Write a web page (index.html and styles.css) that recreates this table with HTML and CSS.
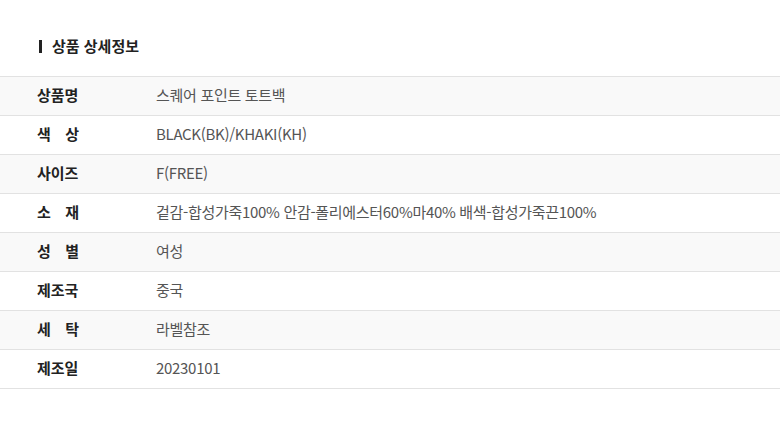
FILE: index.html
```html
<!DOCTYPE html>
<html lang="ko">
<head>
<meta charset="utf-8">
<link rel="stylesheet" href="styles.css">
</head>
<body>
<section class="detail">
  <h2 class="title">상품 상세정보</h2>
  <dl class="table">
    <div class="row alt"><dt>상품명</dt><dd>스퀘어 포인트 토트백</dd></div>
    <div class="row"><dt class="spaced">색 상</dt><dd>BLACK(BK)/KHAKI(KH)</dd></div>
    <div class="row alt"><dt>사이즈</dt><dd>F(FREE)</dd></div>
    <div class="row"><dt class="spaced">소 재</dt><dd>겉감-합성가죽100% 안감-폴리에스터60%마40% 배색-합성가죽끈100%</dd></div>
    <div class="row alt"><dt class="spaced">성 별</dt><dd>여성</dd></div>
    <div class="row"><dt>제조국</dt><dd>중국</dd></div>
    <div class="row alt"><dt class="spaced">세 탁</dt><dd>라벨참조</dd></div>
    <div class="row"><dt>제조일</dt><dd>20230101</dd></div>
  </dl>
</section>
</body>
</html>
```
FILE: styles.css
```css
* { box-sizing: border-box; }
html, body { margin: 0; padding: 0; background: #fff; }
body {
  font-family: "Noto Sans CJK KR", "Noto Sans", sans-serif;
  color: #222;
}
.detail { padding-top: 40px; }
.title {
  margin: 0 0 23px 39px;
  padding-left: 10px;
  padding-bottom: 2px;
  border-left: 3px solid #222;
  font-size: 15px;
  font-weight: 700;
  line-height: 13px;
  height: 13px;
  display: flex;
  align-items: center;
  color: #222;
}
.table {
  margin: 0;
  border-top: 1px solid #e2e2e2;
}
.row {
  display: flex;
  align-items: center;
  height: 39px;
  padding-bottom: 3px;
  border-bottom: 1px solid #e2e2e2;
  background: #fff;
}
.row.alt { background: #f9f9f9; }
.row dt {
  width: 42px;
  margin-left: 37px;
  font-size: 15px;
  font-weight: 700;
  color: #222;
  text-align: justify;
  text-align-last: justify;
}
.row dd {
  margin: 0 0 0 77px;
  font-size: 15px;
  color: #555;
  letter-spacing: -0.3px;
}
```
